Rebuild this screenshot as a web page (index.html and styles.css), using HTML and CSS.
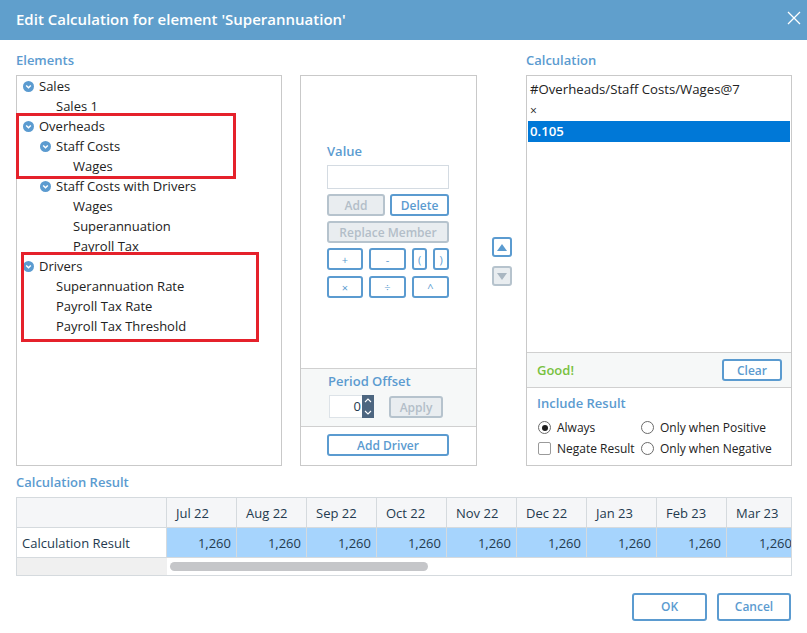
FILE: index.html
```html
<!DOCTYPE html>
<html>
<head>
<meta charset="utf-8">
<link rel="stylesheet" href="styles.css">
</head>
<body>
<div class="dialog">
  <div class="titlebar">
    <span class="title">Edit Calculation for element 'Superannuation'</span>
    <svg class="close" width="14" height="14" viewBox="0 0 14 14"><path d="M1 1 L13 13 M13 1 L1 13" stroke="#fff" stroke-width="1.3" fill="none"/></svg>
  </div>
  <div class="content">
    <div class="top">
      <div class="col col-elements">
        <div class="label">Elements</div>
        <div class="box tree">
          <div class="node l0"><svg class="tw" viewBox="0 0 11 11"><circle cx="5.5" cy="5.5" r="5.5" fill="#5b9bd0"/><path d="M3.2 4.5 L5.5 6.8 L7.8 4.5" stroke="#fff" stroke-width="1.5" fill="none"/></svg><span>Sales</span></div>
          <div class="node leaf l1"><span>Sales 1</span></div>
          <div class="node l0"><svg class="tw" viewBox="0 0 11 11"><circle cx="5.5" cy="5.5" r="5.5" fill="#5b9bd0"/><path d="M3.2 4.5 L5.5 6.8 L7.8 4.5" stroke="#fff" stroke-width="1.5" fill="none"/></svg><span>Overheads</span></div>
          <div class="node l1"><svg class="tw" viewBox="0 0 11 11"><circle cx="5.5" cy="5.5" r="5.5" fill="#5b9bd0"/><path d="M3.2 4.5 L5.5 6.8 L7.8 4.5" stroke="#fff" stroke-width="1.5" fill="none"/></svg><span>Staff Costs</span></div>
          <div class="node leaf l2"><span>Wages</span></div>
          <div class="node l1"><svg class="tw" viewBox="0 0 11 11"><circle cx="5.5" cy="5.5" r="5.5" fill="#5b9bd0"/><path d="M3.2 4.5 L5.5 6.8 L7.8 4.5" stroke="#fff" stroke-width="1.5" fill="none"/></svg><span>Staff Costs with Drivers</span></div>
          <div class="node leaf l2"><span>Wages</span></div>
          <div class="node leaf l2"><span>Superannuation</span></div>
          <div class="node leaf l2"><span>Payroll Tax</span></div>
          <div class="node l0"><svg class="tw" viewBox="0 0 11 11"><circle cx="5.5" cy="5.5" r="5.5" fill="#5b9bd0"/><path d="M3.2 4.5 L5.5 6.8 L7.8 4.5" stroke="#fff" stroke-width="1.5" fill="none"/></svg><span>Drivers</span></div>
          <div class="node leaf l1"><span>Superannuation Rate</span></div>
          <div class="node leaf l1"><span>Payroll Tax Rate</span></div>
          <div class="node leaf l1"><span>Payroll Tax Threshold</span></div>
          <div class="mark mark1"></div>
          <div class="mark mark2"></div>
        </div>
      </div>

      <div class="col col-mid">
        <div class="label"></div>
        <div class="box mid">
          <div class="mid-top">
            <div class="label small">Value</div>
            <div class="input"></div>
            <div class="row two">
              <button class="btn disabled">Add</button>
              <button class="btn">Delete</button>
            </div>
            <div class="row">
              <button class="btn disabled wide">Replace Member</button>
            </div>
            <div class="ops">
              <button class="btn op">+</button>
              <button class="btn op">-</button>
              <button class="btn op">(</button>
              <button class="btn op">)</button>
              <button class="btn op">×</button>
              <button class="btn op">÷</button>
              <button class="btn op span2">^</button>
            </div>
          </div>
          <div class="period">
            <div class="label small">Period Offset</div>
            <div class="period-row">
              <div class="spin">
                <div class="spin-val">0</div>
                <div class="spin-btns">
                  <svg viewBox="0 0 12 11" width="12" height="11"><path d="M3 7 L6 4 L9 7" stroke="#fff" stroke-width="1.1" fill="none"/></svg>
                  <svg viewBox="0 0 12 11" width="12" height="11"><path d="M3 4 L6 7 L9 4" stroke="#fff" stroke-width="1.1" fill="none"/></svg>
                </div>
              </div>
              <button class="btn disabled apply">Apply</button>
            </div>
          </div>
          <div class="mid-bottom">
            <button class="btn wide">Add Driver</button>
          </div>
        </div>
      </div>

      <div class="col arrows">
        <div class="arrow-btn">
          <svg viewBox="0 0 16 15" width="16" height="15"><path d="M3 11 L8 4 L13 11 Z" fill="#5b9bd0"/></svg>
        </div>
        <div class="arrow-btn disabled">
          <svg viewBox="0 0 16 15" width="16" height="15"><path d="M3 4 L8 11 L13 4 Z" fill="#a9b6c1"/></svg>
        </div>
      </div>

      <div class="col col-calc">
        <div class="label">Calculation</div>
        <div class="box calc">
          <div class="calc-list">
            <div class="item">#Overheads/Staff Costs/Wages@7</div>
            <div class="item op-item">×</div>
            <div class="item selected">0.105</div>
          </div>
          <div class="status">
            <span class="good">Good!</span>
            <button class="btn clear">Clear</button>
          </div>
          <div class="include">
            <div class="label small">Include Result</div>
            <div class="opts">
              <div class="opt"><span class="radio checked"></span>Always</div>
              <div class="opt"><span class="radio"></span>Only when Positive</div>
              <div class="opt"><span class="check"></span>Negate Result</div>
              <div class="opt"><span class="radio"></span>Only when Negative</div>
            </div>
          </div>
        </div>
      </div>
    </div>

    <div class="label result-label">Calculation Result</div>
    <div class="table">
      <div class="trow head">
        <div class="cell first"></div>
        <div class="cell">Jul 22</div>
        <div class="cell">Aug 22</div>
        <div class="cell">Sep 22</div>
        <div class="cell">Oct 22</div>
        <div class="cell">Nov 22</div>
        <div class="cell">Dec 22</div>
        <div class="cell">Jan 23</div>
        <div class="cell">Feb 23</div>
        <div class="cell last">Mar 23</div>
      </div>
      <div class="trow data">
        <div class="cell first">Calculation Result</div>
        <div class="cell num">1,260</div>
        <div class="cell num">1,260</div>
        <div class="cell num">1,260</div>
        <div class="cell num">1,260</div>
        <div class="cell num">1,260</div>
        <div class="cell num">1,260</div>
        <div class="cell num">1,260</div>
        <div class="cell num">1,260</div>
        <div class="cell num last">1,260</div>
      </div>
      <div class="trow scroll">
        <div class="scroll-first"></div>
        <div class="scroll-track"><div class="thumb"></div></div>
      </div>
    </div>

    <div class="footer">
      <button class="btn big">OK</button>
      <button class="btn big">Cancel</button>
    </div>
  </div>
</div>
</body>
</html>
```

FILE: styles.css
```css
* { box-sizing: border-box; }
html, body { margin: 0; padding: 0; background: #fff; }
body { font-family: "Open Sans", "Liberation Sans", sans-serif; font-size: 13px; color: #222; }

.dialog { width: 807px; height: 633px; background: #fff; overflow: hidden; }

.titlebar {
  height: 40px; background: #609fcc; display: flex; align-items: center;
  justify-content: space-between; padding: 0 6px 2px 16px;
}
.title { color: #fff; font-size: 15px; font-weight: 600; }
.close { display: block; margin-bottom: 3px; }

.content { padding: 12px 15px 0 16px; }

.label { height: 23px; line-height: 16px; color: #5b9bd0; font-weight: 600; font-size: 13px; }
.label.small { height: auto; }

.top { display: flex; }
.col { display: flex; flex-direction: column; }
.col-elements { width: 266px; margin-right: 18px; }
.col-mid { width: 177px; }
.arrows { width: 49px; align-items: center; padding-top: 185px; gap: 9px; }
.col-calc { width: 266px; }

.box { border: 1px solid #c9c9c9; height: 391px; position: relative; }

/* tree */
.tree { padding-top: 0; }
.node { height: 20px; display: flex; align-items: center; white-space: nowrap; }
.node .tw { width: 11px; height: 11px; margin-right: 5px; flex: none; }
.node.l0 { padding-left: 6px; }
.node.l1 { padding-left: 23px; }
.node.leaf.l1 { padding-left: 39px; }
.node.leaf.l2 { padding-left: 56px; }

.mark { position: absolute; border: 3px solid #e5212b; }
.mark1 { left: -1px; top: 37px; width: 220px; height: 66px; }
.mark2 { left: 4px; top: 176px; width: 238px; height: 90px; }

/* buttons */
.btn {
  font-family: "Open Sans", "Liberation Sans", sans-serif; font-size: 12px; font-weight: 600;
  color: #5b9bd0; background: #fff; border: 2px solid #5b9bd0; border-radius: 3px;
  height: 22px; padding: 1px 0 0 0; line-height: 18px; cursor: default;
}
.btn.disabled { background: #e9edf0; border-color: #b6c3cd; color: #b3bec8; }

/* middle */
.mid { display: flex; flex-direction: column; }
.mid-top { height: 292px; padding: 67px 27px 0 26px; }
.mid-top .label.small { margin-bottom: 6px; }
.input { height: 24px; border: 1px solid #d4dbe2; background: #fff; margin-bottom: 5px; }
.row { display: flex; gap: 5px; margin-bottom: 5px; }
.row.two .btn:first-child { width: 58px; }
.row.two .btn:last-child { width: 59px; }
.btn.wide { width: 122px; }
.ops { display: grid; grid-template-columns: 36px 37px 15px 16px; column-gap: 6px; row-gap: 6px; margin-top: 1px; }
.btn.op { font-size: 11px; font-weight: 400; }
.btn.span2 { grid-column: 3 / span 2; }

.period {
  height: 59px; border-top: 1px solid #d0d0d0; border-bottom: 1px solid #d0d0d0;
  background: #f6f8f8; padding: 4px 27px 0 27px;
}
.period-row { display: flex; align-items: center; margin-top: 6px; }
.spin { display: flex; height: 23px; margin-left: 1px; }
.spin-val { width: 33px; height: 23px; background: #fff; border: 1px solid #dde3e8; border-right: none; text-align: right; padding-right: 1px; line-height: 21px; font-size: 13px; color: #243a4f; }
.spin-btns { width: 12px; background: #4d6680; display: flex; flex-direction: column; justify-content: space-between; }
.spin-btns svg { display: block; }
.btn.apply { width: 54px; margin-left: 15px; }
.mid-bottom { padding: 7px 27px 0 26px; }

/* arrows */
.arrow-btn { width: 20px; height: 20px; border: 2px solid #5b9bd0; border-radius: 3px; display: flex; align-items: center; justify-content: center; background: #fff; }
.arrow-btn.disabled { border-color: #b6c3cd; background: #e9edf0; }
.arrow-btn svg { display: block; }

/* calc */
.calc { display: flex; flex-direction: column; }
.calc-list { height: 276px; padding: 3px 1px 0 1px; }
.item { height: 21px; line-height: 21px; padding-left: 2px; font-size: 13.2px; white-space: nowrap; }
.item.op-item { font-size: 12px; }
.item.selected { background: #0078d7; color: #fff; font-weight: 600; }
.status { height: 36px; border-top: 1px solid #d0d0d0; border-bottom: 1px solid #d0d0d0; background: #f6f8f8; display: flex; align-items: center; justify-content: space-between; padding: 0 9px 0 10px; }
.good { color: #78c13f; font-weight: 600; font-size: 13px; }
.btn.clear { width: 60px; }
.include { padding: 7px 0 0 10px; }
.include .label.small { margin-bottom: 6px; }
.opts { display: grid; grid-template-columns: 103px auto; }
.opt { height: 21px; display: flex; align-items: center; font-size: 12px; color: #222; white-space: nowrap; }
.radio { width: 13px; height: 13px; border: 1px solid #6b6b6b; border-radius: 50%; margin: 0 6px 0 1px; position: relative; flex: none; background: #fff; }
.radio.checked::after { content: ""; position: absolute; left: 2.5px; top: 2.5px; width: 6px; height: 6px; border-radius: 50%; background: #1e1e1e; }
.check { width: 13px; height: 13px; border: 1px solid #9a9a9a; border-radius: 2px; margin: 0 6px 0 1px; background: #fff; flex: none; }

/* result table */
.result-label { margin-top: 8px; }
.table { border: 1px solid #d5dade; width: 776px; overflow: hidden; }
.trow { display: flex; }
.cell { flex: none; width: 70px; height: 29px; line-height: 29px; padding-top: 1px; border-right: 1px solid #d5dade; padding-left: 9px; padding-right: 9px; font-size: 13px; color: #243a4f; white-space: nowrap; }
.cell.first { width: 150px; padding-left: 5px; }
.cell.last { border-right: none; }
.head { background: #f5f6f8; border-bottom: 1px solid #d5dade; }
.data { border-bottom: 1px solid #d5dade; }
.data .cell.num { background: #a6d4fd; text-align: right; padding-right: 5px; }
.data .cell.first { background: #fff; }
.scroll { height: 17px; }
.scroll-first { width: 150px; background: #f0f0f0; }
.scroll-track { flex: 1; position: relative; background: #fff; padding: 4px 0 0 3px; }
.thumb { width: 258px; height: 9px; border-radius: 5px; background: #c5c6c9; }

.footer { display: flex; justify-content: flex-end; gap: 10px; margin-top: 17px; padding-right: 1px; }
.btn.big { width: 75px; height: 28px; line-height: 24px; font-size: 12px; padding-top: 0; }
.btn.big:last-child { width: 74px; }
```
